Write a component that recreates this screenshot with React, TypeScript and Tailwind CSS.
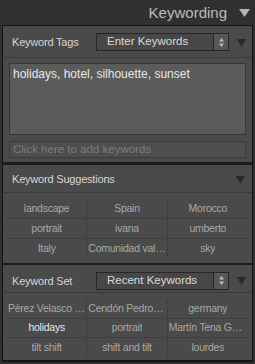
import React from 'react';

const font = { fontFamily: '"Liberation Sans", Arial, sans-serif' };

function Tri({ className }: { className: string }) {
  return (
    <svg width="9" height="9" viewBox="0 0 9 9" className={className}>
      <polygon points="0,1 9,1 4.5,9" fill="currentColor" />
    </svg>
  );
}

function Select({ label }: { label: string }) {
  return (
    <div className="flex h-[18px] w-[133px] border border-[#262626] bg-[#474747]">
      <div className="flex flex-1 items-center pl-[10px] text-[11.5px] text-[#dadada]">{label}</div>
      <div className="flex w-[15px] items-center justify-center border-l border-[#262626] bg-[#575757]">
        <svg width="7" height="11" viewBox="0 0 7 11">
          <polygon points="3.5,1 6,4.5 1,4.5" fill="#bdbdbd" />
          <polygon points="3.5,10 6,6.5 1,6.5" fill="#bdbdbd" />
        </svg>
      </div>
    </div>
  );
}

function Grid({ items, rowH, bright }: { items: string[]; rowH: string; bright?: string }) {
  return (
    <div className="mx-[4px] grid grid-cols-3">
      {items.map((t, i) => (
        <div
          key={i}
          className={`${rowH} flex min-w-0 items-center justify-center px-[1px] text-[10.5px] tracking-[-0.25px] ${
            i % 3 !== 2 ? 'border-r' : ''
          } ${i < 6 ? 'border-b' : ''} border-[#3e3e3e] ${t === bright ? 'text-[#e6e6e6]' : 'text-[#a8a8a8]'}`}
        >
          <span className="truncate">{t}</span>
        </div>
      ))}
    </div>
  );
}

export default function App() {
  return (
    <div style={font} className="flex h-[364px] w-[255px] flex-col bg-[#303030] px-[2px]">
      <div className="flex h-[25px] shrink-0 items-center justify-end pr-[3px] pt-[2px]">
        <span className="text-[15px] text-[#bcbcbc]">Keywording</span>
        <svg width="11" height="9" viewBox="0 0 11 9" className="ml-[12px]">
          <polygon points="0,0 11,0 5.5,8" fill="#b4b4b4" />
        </svg>
      </div>

      <div className="flex flex-col border border-b-2 border-[#151515] bg-[#4a4a4a]">
        {/* Keyword Tags */}
        <div className="flex h-[32px] items-start border-b border-[#3a3a3a] pl-[9px] pt-[7px]">
          <div className="flex h-[18px] items-center">
            <span className="w-[84px] text-[11px] tracking-[-0.2px] text-[#d6d6d6]">Keyword Tags</span>
            <Select label="Enter Keywords" />
            <Tri className="ml-[8px] text-[#2a2a2a]" />
          </div>
        </div>
        <div className="px-[6px] pb-[4px] pt-[5px]">
          <div className="h-[72px] border border-[#363636] bg-[#5a5b5a] px-[3px] pt-[1px] text-[12px] text-[#e8e8e8]">
            holidays, hotel, silhouette, sunset
          </div>
          <div className="mt-[6px] flex h-[17px] items-center border border-[#3a3a3a] bg-[#4e4e4e] pl-[3px] text-[11.5px] text-[#7c7c7c]">
            Click here to add keywords
          </div>
        </div>

        <div className="h-[3px] bg-[#1c1c1c]" />

        {/* Keyword Suggestions */}
        <div className="flex h-[28px] items-center justify-between border-b border-[#3a3a3a] pl-[9px] pr-[7px] pt-[1px]">
          <span className="text-[11px] tracking-[-0.2px] text-[#d6d6d6]">Keyword Suggestions</span>
          <Tri className="text-[#2a2a2a]" />
        </div>
        <div className="pb-[4px] pt-[6px]">
          <Grid
            rowH="h-[20px]"
            items={['landscape', 'Spain', 'Morocco', 'portrait', 'ivana', 'umberto', 'Italy', 'Comunidad valenciana', 'sky']}
          />
        </div>

        <div className="h-[2px] bg-[#1c1c1c]" />

        {/* Keyword Set */}
        <div className="flex h-[28px] items-start border-b border-[#3a3a3a] pl-[9px] pt-[7px]">
          <div className="flex h-[17px] items-center">
            <span className="w-[84px] pt-[2px] text-[11px] tracking-[-0.2px] text-[#d6d6d6]">Keyword Set</span>
            <Select label="Recent Keywords" />
            <Tri className="ml-[8px] text-[#2a2a2a]" />
          </div>
        </div>
        <div className="pb-[3px] pt-[7px]">
          <Grid
            rowH="h-[19px]"
            bright="holidays"
            items={[
              'Pèrez Velasco Juan',
              'Cendón Pedro Luis',
              'germany',
              'holidays',
              'portrait',
              'Martín Tena Gonzalo',
              'tilt shift',
              'shift and tilt',
              'lourdes',
            ]}
          />
        </div>
      </div>
    </div>
  );
}
